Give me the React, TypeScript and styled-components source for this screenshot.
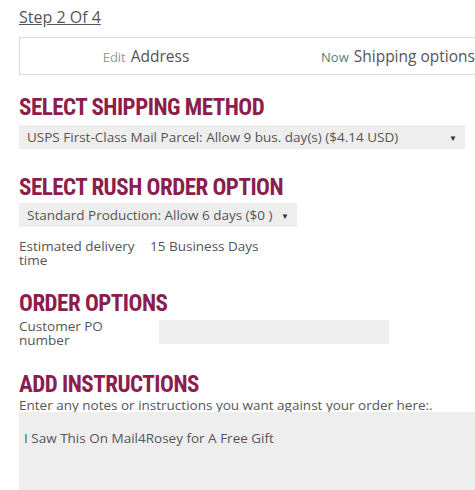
import React from "react";
import styled, { createGlobalStyle } from "styled-components";

const Global = createGlobalStyle`
  html, body { margin: 0; padding: 0; background: #fff; overflow: hidden; }
  body { font-family: "Open Sans", "Liberation Sans", sans-serif; color: #555; }
`;

const Page = styled.div`
  padding: 7px 0 0 19px;
  width: 600px;
  display: flex;
  flex-direction: column;
`;

const StepLink = styled.a`
  font-size: 16px;
  color: #555;
  text-decoration: underline;
  line-height: 20px;
  align-self: flex-start;
`;

const StepBar = styled.div`
  margin-top: 10px;
  width: 504px;
  height: 36px;
  border: 1px solid #ddd;
  display: grid;
  grid-template-columns: 1fr 1fr;
  align-items: center;
`;

const Step = styled.div`
  text-align: center;
  font-size: 15.5px;
  color: #555;
`;

const StepTag = styled.span<{ $now?: boolean }>`
  font-size: 13px;
  color: ${(p) => (p.$now ? "#4f7f7f" : "#999")};
  margin-right: 5px;
`;

const Heading = styled.h2<{ $top: number }>`
  margin: ${(p) => p.$top}px 0 0 0;
  font-family: "Roboto Condensed", "Liberation Sans Narrow", "Roboto", sans-serif;
  font-stretch: condensed;
  font-weight: 700;
  font-size: 23px;
  line-height: 26px;
  color: #8c1d4d;
  letter-spacing: -0.5px;
`;

const Select = styled.div<{ $width: number; $top: number }>`
  margin-top: ${(p) => p.$top}px;
  width: ${(p) => p.$width}px;
  height: 24px;
  background: #eee;
  display: flex;
  align-items: center;
  justify-content: space-between;
  gap: 6px;
  padding: 0 8px;
  box-sizing: border-box;
  font-size: 13.5px;
  color: #555;
  white-space: nowrap;
`;

const Arrow = styled.span`
  font-size: 8px;
  color: #333;
`;

const InfoRow = styled.div<{ $top: number; $col: number }>`
  margin-top: ${(p) => p.$top}px;
  display: grid;
  grid-template-columns: ${(p) => p.$col}px auto;
  font-size: 13.5px;
  line-height: 14px;
  color: #555;
  align-items: start;
`;

const Label = styled.div`
  width: 120px;
`;

const Input = styled.div`
  width: 230px;
  height: 24px;
  background: #eee;
  margin-top: 1px;
`;

const Note = styled.div`
  font-size: 13.5px;
  line-height: 14px;
  color: #555;
`;

const TextArea = styled.div`
  width: 520px;
  height: 90px;
  background: #eee;
  padding: 17px 5px;
  box-sizing: border-box;
  font-size: 13.5px;
  color: #555;
`;

export default function App() {
  return (
    <>
      <Global />
      <Page>
        <StepLink>Step 2 Of 4</StepLink>
        <StepBar>
          <Step>
            <StepTag>Edit</StepTag>Address
          </Step>
          <Step>
            <StepTag $now>Now</StepTag>Shipping options
          </Step>
        </StepBar>
        <Heading $top={20}>SELECT SHIPPING METHOD</Heading>
        <Select $width={446} $top={4}>
          USPS First-Class Mail Parcel: Allow 9 bus. day(s) ($4.14 USD)
          <Arrow>▼</Arrow>
        </Select>
        <Heading $top={26}>SELECT RUSH ORDER OPTION</Heading>
        <Select $width={278} $top={2}>
          Standard Production: Allow 6 days ($0 )
          <Arrow>▼</Arrow>
        </Select>
        <InfoRow $top={12} $col={131}>
          <Label>Estimated delivery time</Label>
          <div>15 Business Days</div>
        </InfoRow>
        <Heading $top={24}>ORDER OPTIONS</Heading>
        <InfoRow $top={2} $col={140}>
          <Label>Customer PO number</Label>
          <Input />
        </InfoRow>
        <Heading $top={25}>ADD INSTRUCTIONS</Heading>
        <Note>Enter any notes or instructions you want against your order here:.</Note>
        <TextArea>I Saw This On Mail4Rosey for A Free Gift</TextArea>
      </Page>
    </>
  );
}
